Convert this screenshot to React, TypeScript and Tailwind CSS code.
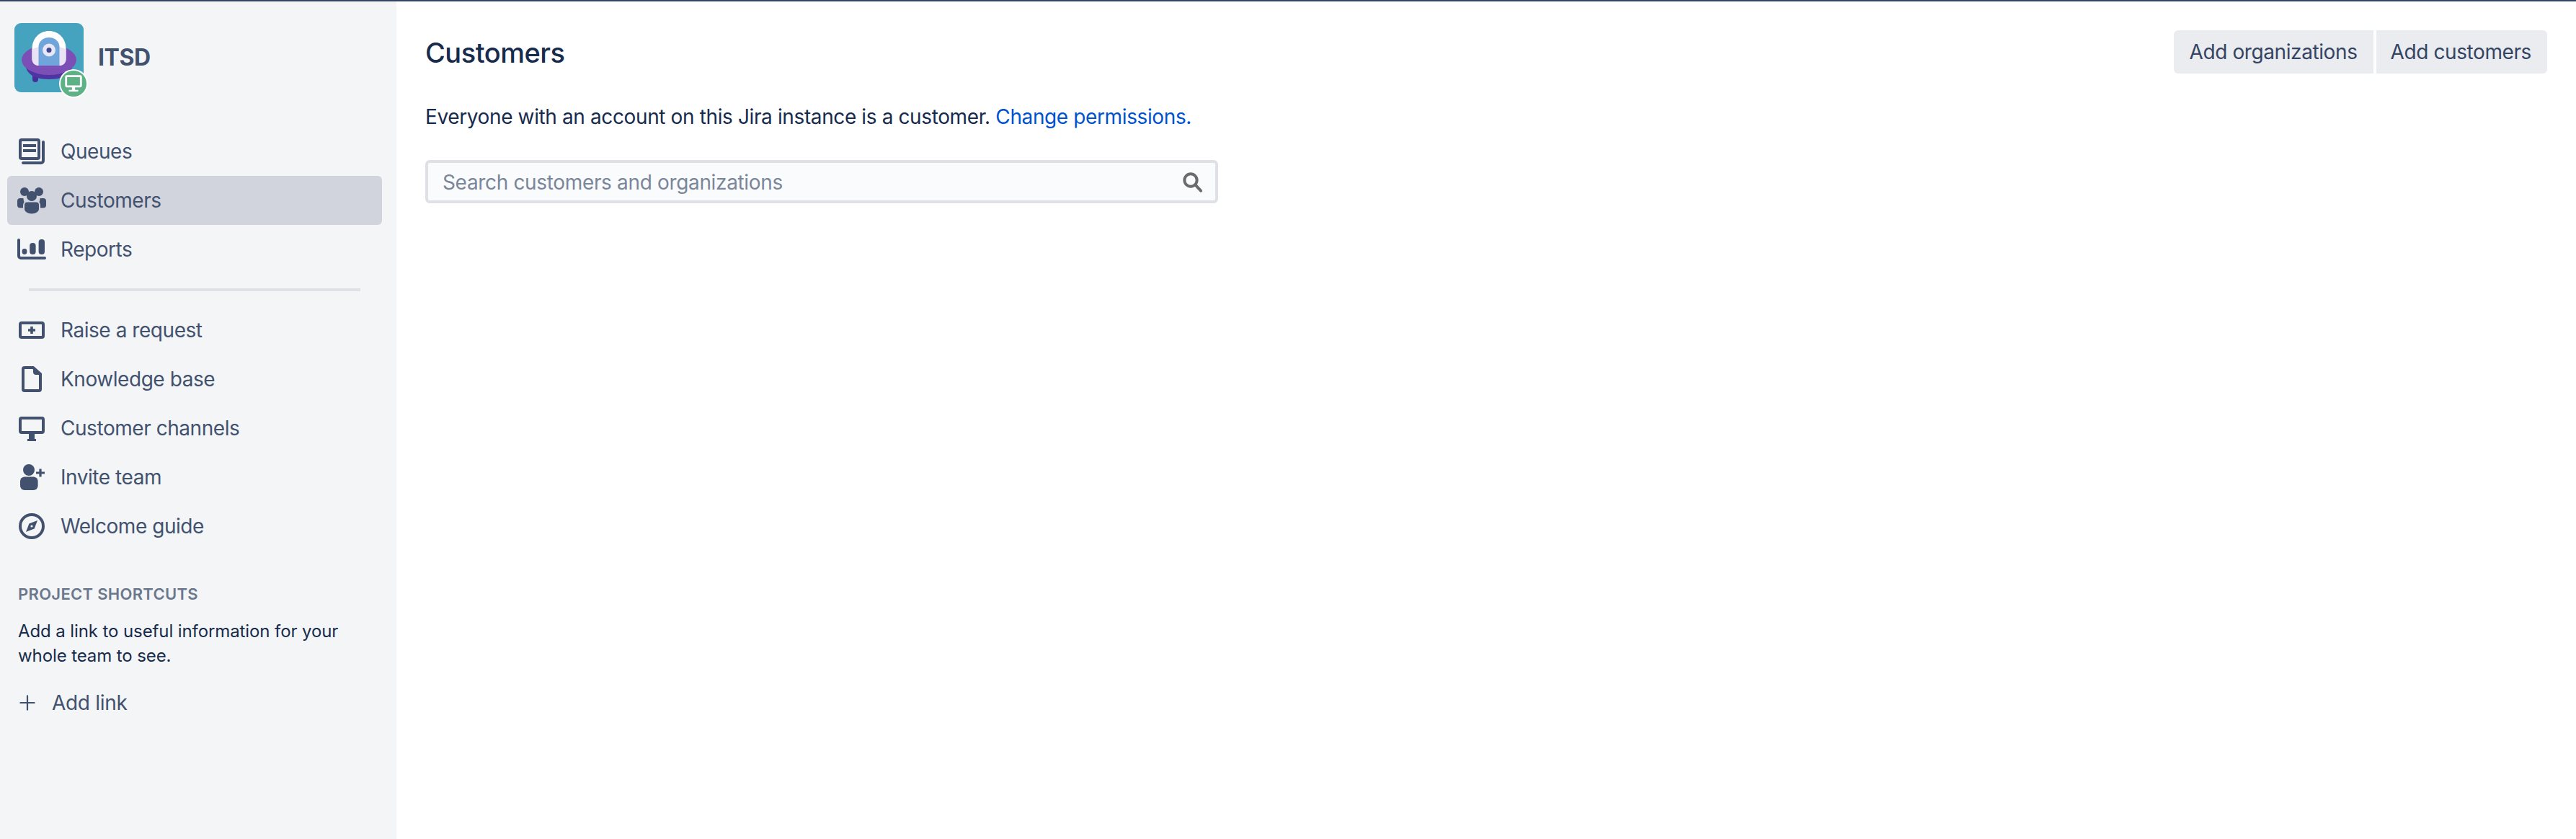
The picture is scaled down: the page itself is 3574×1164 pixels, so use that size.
import React from "react";

const Icon = ({ children }: { children: React.ReactNode }) => (
  <svg viewBox="0 0 24 24" className="w-[48px] h-[48px] shrink-0" fill="none">
    {children}
  </svg>
);

const c = "#42526e";

const QueuesIcon = () => (
  <Icon>
    <rect x="4" y="4" width="13" height="13" rx="1" stroke={c} strokeWidth="2" />
    <rect x="6" y="7" width="9" height="2" fill={c} />
    <rect x="6" y="10.500" width="9" height="2" fill={c} />
    <path d="M20 5.500V18.500a1.500 1.500 0 0 1-1.500 1.500H6" stroke={c} strokeWidth="2" strokeLinecap="round" />
  </Icon>
);

const PeopleIcon = () => (
  <Icon>
    <circle cx="7" cy="6" r="3" fill={c} />
    <circle cx="17" cy="6" r="3" fill={c} />
    <path d="M4 10.500h2.200a7 7 0 0 0 .6 2.600 3.500 3.500 0 0 0-.8 2.200v2H4a2 2 0 0 1-2-2v-2.800a2 2 0 0 1 2-2zM20 10.500h-2.200a7 7 0 0 1-.6 2.600 3.500 3.500 0 0 1 .8 2.200v2H20a2 2 0 0 0 2-2v-2.800a2 2 0 0 0-2-2z" fill={c} />
    <circle cx="12" cy="9" r="3.500" fill={c} />
    <path d="M9 13.300h6a2 2 0 0 1 2 2V18c0 1.800-2.200 3.200-5 3.200S7 19.800 7 18v-2.700a2 2 0 0 1 2-2z" fill={c} />
  </Icon>
);

const ReportsIcon = () => (
  <Icon>
    <path d="M3 5.500V16.500a1.500 1.500 0 0 0 1.500 1.500H21" stroke={c} strokeWidth="2" strokeLinecap="round" />
    <rect x="5.300" y="11.500" width="3.400" height="4" rx="1.700" fill={c} />
    <rect x="10.600" y="7.500" width="4.200" height="8" rx="2" fill={c} />
    <rect x="16.800" y="5" width="4.200" height="10.500" rx="2" fill={c} />
  </Icon>
);

const RaiseIcon = () => (
  <Icon>
    <rect x="4" y="7" width="16" height="10" rx="1" stroke={c} strokeWidth="2" />
    <path d="M12 9.500v5M9.500 12h5" stroke={c} strokeWidth="1.800" />
  </Icon>
);

const PageIcon = () => (
  <Icon>
    <path d="M7 4h6l5 4.500V19a1 1 0 0 1-1 1H7a1 1 0 0 1-1-1V5a1 1 0 0 1 1-1z" stroke={c} strokeWidth="2" />
    <path d="M13 3.500l5.500 5.500H15a2 2 0 0 1-2-2z" fill={c} />
  </Icon>
);

const MonitorIcon = () => (
  <Icon>
    <rect x="4" y="5" width="16" height="10" rx="1" stroke={c} strokeWidth="2" />
    <path d="M10 16h4v3.500h-4zM9 19.500h6V21H9z" fill={c} />
  </Icon>
);

const InviteIcon = () => (
  <Icon>
    <circle cx="10" cy="7" r="4" fill={c} />
    <rect x="4" y="11.800" width="12.300" height="9.200" rx="3" fill={c} />
    <path d="M18 6.200v5.600M15 9h6" stroke={c} strokeWidth="1.600" />
  </Icon>
);

const CompassIcon = () => (
  <Icon>
    <circle cx="12" cy="12" r="8" stroke={c} strokeWidth="2" />
    <path d="M16 8l-5.800 2.200L8 16l5.800-2.200z" fill={c} />
    <circle cx="12" cy="12" r=".8" fill="#f4f5f7" />
  </Icon>
);

const NavRow = ({ icon, label, active }: { icon: React.ReactNode; label: string; active?: boolean }) => (
  <div className={`mx-[10px] h-[68px] pl-[10px] w-[520px] flex items-center gap-[16px] rounded-[6px] ${active ? "bg-[#d1d3dd]" : ""}`}>
    {icon}
    <span className="text-[28px] leading-[40px] tracking-[-0.45px] text-[#42526e]">{label}</span>
  </div>
);

const Logo = () => (
  <div className="relative w-[96px] h-[96px] shrink-0">
    <svg viewBox="0 0 96 96" className="w-[96px] h-[96px] block">
      <rect width="96" height="96" rx="9" fill="#46a3bf" />
      <rect x="25" y="66" width="8" height="16" rx="4" fill="#4a2d9c" />
      <path d="M16 62c4 12 16 16 32 16s28-4 32-16z" fill="#4f34a3" />
      <ellipse cx="48" cy="51" rx="38" ry="21" fill="#7b4fb5" />
      <path d="M24.500 36C24.500 21 35 11 48 11s23.500 10 23.500 25v14c0 5-4 9-9 9h-29c-5 0-9-4-9-9z" fill="#ffffff" />
      <path d="M24.500 36.500C31 33 39 31.500 48 31.500s17 1.500 23.500 5V50c0 5-4 9-9 9h-29c-5 0-9-4-9-9z" fill="#e9e3f5" />
      <path d="M33.500 33c0-7 6-13 14.500-13s14.500 6 14.500 13v26h-29z" fill="#70a5dc" />
      <circle cx="48" cy="37.500" r="9" fill="#e9e6f5" />
      <circle cx="48" cy="37.500" r="3.500" fill="#3f4a8f" />
    </svg>
    <div className="absolute left-[62px] top-[64px] w-[40px] h-[40px] rounded-full bg-white flex items-center justify-center">
      <div className="w-[36px] h-[36px] rounded-full bg-[#5cb284] flex items-center justify-center">
        <svg viewBox="0 0 24 24" className="w-[26px] h-[26px]" fill="none">
          <rect x="2.500" y="2.500" width="19" height="13" rx="1" stroke="#fff" strokeWidth="2.600" />
          <path d="M10 16h4v4h-4zM6 20h12v2.200H6z" fill="#fff" />
        </svg>
      </div>
    </div>
  </div>
);

export default function App() {
  return (
    <div className="h-screen flex flex-col bg-white antialiased font-['Inter','Liberation_Sans',sans-serif]">
      <div className="h-[2px] shrink-0 bg-[#344563]" />
      <div className="flex-1 flex min-h-0">
        <aside className="w-[550px] shrink-0 bg-[#f4f5f7]">
          <div className="flex items-center gap-[20px] pl-[20px] pt-[30px] pb-[48px]">
            <Logo />
            <span className="text-[32px] leading-[42px] font-bold text-[#42526e] tracking-[-0.4px]">ITSD</span>
          </div>
          <NavRow icon={<QueuesIcon />} label="Queues" />
          <NavRow icon={<PeopleIcon />} label="Customers" active />
          <NavRow icon={<ReportsIcon />} label="Reports" />
          <div className="ml-[40px] mr-[50px] mt-[20px] mb-[20px] h-[4px] bg-[#dfe1e6]" />
          <NavRow icon={<RaiseIcon />} label="Raise a request" />
          <NavRow icon={<PageIcon />} label="Knowledge base" />
          <NavRow icon={<MonitorIcon />} label="Customer channels" />
          <NavRow icon={<InviteIcon />} label="Invite team" />
          <NavRow icon={<CompassIcon />} label="Welcome guide" />
          <div className="pl-[25px] pr-[40px] pt-[44px]">
            <div className="text-[22px] leading-[32px] font-semibold tracking-[0.3px] text-[#6b778c]">PROJECT SHORTCUTS</div>
            <p className="mt-[19px] text-[24px] leading-[34px] tracking-[-0.1px] text-[#172b4d]">
              Add a link to useful information for your whole team to see.
            </p>
          </div>
          <div className="flex items-center pl-[27px] mt-[28px] h-[40px]">
            <svg viewBox="0 0 24 24" className="w-[22px] h-[22px] shrink-0" fill="none">
              <path d="M12 1.500v21M1.500 12h21" stroke="#42526e" strokeWidth="2.400" strokeLinecap="round" />
            </svg>
            <span className="ml-[23px] text-[28px] leading-[40px] tracking-[-0.3px] text-[#42526e]">Add link</span>
          </div>
        </aside>
        <main className="flex-1 min-w-0 pl-[40px] pr-[40px] pt-[40px]">
          <div className="flex items-start justify-between h-[60px]">
            <h1 className="text-[38px] leading-[62px] font-medium tracking-[-0.5px] text-[#172b4d]">Customers</h1>
            <div className="flex gap-[4px]">
              <button className="h-[60px] px-[22px] bg-[#ebecf0] rounded-l-[6px] text-[28px] tracking-[-0.4px] text-[#344563]">Add organizations</button>
              <button className="h-[60px] pl-[20px] pr-[22px] bg-[#ebecf0] rounded-r-[6px] text-[28px] tracking-[-0.4px] text-[#344563]">Add customers</button>
            </div>
          </div>
          <p className="mt-[40px] text-[28px] leading-[40px] tracking-[-0.38px] text-[#172b4d]">
            Everyone with an account on this Jira instance is a customer.{" "}
            <span className="text-[#0052cc]">Change permissions.</span>
          </p>
          <div className="mt-[40px] w-[1100px] h-[60px] border-[4px] border-[#dfe1e6] bg-[#fafbfc] rounded-[6px] flex items-center justify-between pl-[20px] pr-[16px]">
            <span className="text-[28px] leading-[40px] pt-[2px] tracking-[-0.34px] text-[#7a869a]">Search customers and organizations</span>
            <svg viewBox="0 0 24 24" className="w-[32px] h-[32px]" fill="none">
              <circle cx="10.500" cy="10.500" r="6.500" stroke="#6b6b6b" strokeWidth="3" />
              <path d="M15.500 15.500l5.500 6" stroke="#6b6b6b" strokeWidth="3" strokeLinecap="round" />
            </svg>
          </div>
        </main>
      </div>
    </div>
  );
}
